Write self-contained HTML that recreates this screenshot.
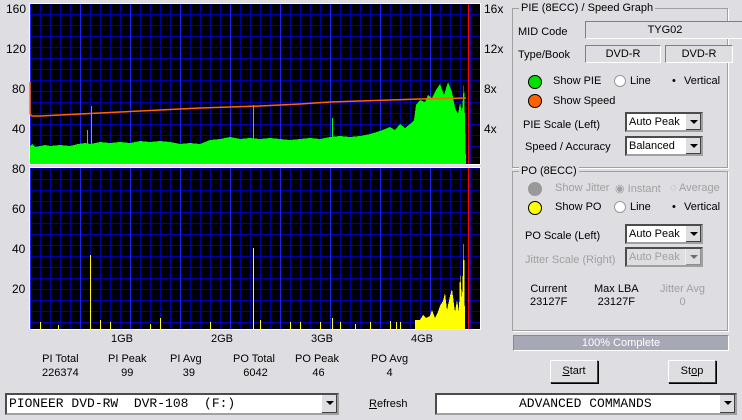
<!DOCTYPE html>
<html><head><style>
body{margin:0;width:742px;height:420px;background:#dedde2;font-family:"Liberation Sans",sans-serif;font-size:11px;color:#000;position:relative;overflow:hidden}
.a{position:absolute}
.grp{position:absolute;border:1px solid #a0a0a0;box-shadow:1px 1px 0 #fff}
.lg{position:absolute;background:#dedde2;padding:0 2px;top:-7px;left:6px}
.box{position:absolute;border:1px solid #808080;border-right-color:#fff;border-bottom-color:#fff;background:#dedde2;text-align:center;line-height:16px}
.sel{position:absolute;background:#fff;border:2px inset #a0a0a0;box-sizing:border-box;line-height:16px;padding-left:2px}
.sel .dd{position:absolute;right:0;top:0;width:15px;height:100%;background:#dedde2;border-left:1px solid #fff;box-shadow:inset -1px -1px 0 #404040}
.sel .dd:after{content:"";position:absolute;left:4px;top:6px;border:4px solid transparent;border-top:4px solid #000;border-bottom:0}
.dis{color:#a0a0a0}
.btn{position:absolute;border:1px solid #fff;border-right-color:#404040;border-bottom-color:#404040;box-shadow:1px 1px 0 #000;text-align:center;background:#dedde2}
.led{position:absolute;width:12px;height:12px;border-radius:50%;border:1px solid #000}
.rad{position:absolute;width:10px;height:10px;border-radius:50%;background:#fff;border:1px solid #999}
</style></head><body>
<svg class="a" style="left:0;top:0" width="500" height="335" shape-rendering="crispEdges">
<defs>
<pattern id="g" x="30" y="3" width="50" height="11" patternUnits="userSpaceOnUse">
<rect width="50" height="11" fill="#000"/>
<path d="M10.5 0V11M20.5 0V11M30.5 0V11M40.5 0V11M0 0.5H50" stroke="#0000a8" stroke-width="1"/>
<path d="M0.5 0V11" stroke="#2020ff" stroke-width="1"/>
</pattern>
</defs>
<rect x="29" y="3" width="452" height="162" fill="url(#g)"/>
<rect x="29" y="167" width="452" height="163" fill="url(#g)"/>
<rect x="29.5" y="3.5" width="451" height="161" fill="none" stroke="#fff" stroke-width="1"/>
<rect x="29.5" y="167.5" width="451" height="162" fill="none" stroke="#fff" stroke-width="1"/>
<polygon fill="#00ff00" points="30,164 30,146 32,144 35,147 40,146 45,145 50,146 60,145 70,146 78,144 85,143 90,144 100,142 110,143 120,142 130,143 140,141 150,142 160,141 170,142 180,144 190,143 200,144 210,140 220,139 230,137 240,139 250,138 260,139 270,138 280,139 290,140 300,139 310,138 320,139 330,137 340,136 350,137 360,136 370,134 380,131 385,129 390,127 395,130 400,124 405,128 410,124 414,120 416,105 420,100 425,102 428,95 432,98 436,90 440,84 444,95 448,82 452,92 455,108 458,114 460,103 462,112 464,82 466,164"/>
<path d="M87.5 148V130M91.5 148V106M253.5 148V105M332.5 148V118" stroke="#00ff00"/>
<polyline fill="none" stroke="#ff6400" stroke-width="1.5" shape-rendering="auto" points="30,82 30,114 32,116 40,116 60,115 80,114 100,113 120,112 140,111 160,110 180,109 200,108 230,107 260,106 300,104 330,102 360,101 390,100 420,99 466,98"/>
<path d="M468.5 4V164M468.5 168V329" stroke="#ff0000" stroke-width="1"/>
<g stroke="#ffff00">
<path d="M40.5 329V322M58.5 329V325M90.5 329V255M100.5 329V320M110.5 329V322M150.5 329V324M160.5 329V318M210.5 329V322M253.5 329V248M260.5 329V320M290.5 329V322M300.5 329V322M320.5 329V322M332.5 329V318M340.5 329V322M355.5 329V324M370.5 329V322M390.5 329V321M396.5 329V322M400.5 329V322"/>
</g>
<polygon fill="#ffff00" points="415,329 415,320 420,320 423,315 426,318 430,316 432,310 435,318 438,312 440,306 443,301 445,293 447,310 450,296 452,289 455,312 457,300 459,312 460,272 462,300 464,236 465,329"/>
</svg>
<div class="a" style="left:6px;top:2px;font-size:12px">160</div>
<div class="a" style="left:6px;top:42px;font-size:12px">120</div>
<div class="a" style="left:12px;top:82px;font-size:12px">80</div>
<div class="a" style="left:12px;top:122px;font-size:12px">40</div>
<div class="a" style="left:12px;top:162px;font-size:12px">80</div>
<div class="a" style="left:12px;top:202px;font-size:12px">60</div>
<div class="a" style="left:12px;top:242px;font-size:12px">40</div>
<div class="a" style="left:12px;top:282px;font-size:12px">20</div>
<div class="a" style="left:484px;top:2px;font-size:12px">16x</div>
<div class="a" style="left:484px;top:42px;font-size:12px">12x</div>
<div class="a" style="left:484px;top:82px;font-size:12px">8x</div>
<div class="a" style="left:484px;top:122px;font-size:12px">4x</div>
<div class="a" style="left:111px;top:333px">1GB</div>
<div class="a" style="left:211px;top:333px">2GB</div>
<div class="a" style="left:311px;top:333px">3GB</div>
<div class="a" style="left:411px;top:333px">4GB</div>
<div class="a" style="left:42px;top:352px;text-align:center;line-height:14px">PI Total<br>226374</div>
<div class="a" style="left:108px;top:352px;text-align:center;line-height:14px">PI Peak<br>99</div>
<div class="a" style="left:170px;top:352px;text-align:center;line-height:14px">PI Avg<br>&nbsp;&nbsp;39</div>
<div class="a" style="left:233px;top:352px;text-align:center;line-height:14px">PO Total<br>&nbsp;6042</div>
<div class="a" style="left:295px;top:352px;text-align:center;line-height:14px">PO Peak<br>&nbsp;46</div>
<div class="a" style="left:371px;top:352px;text-align:center;line-height:14px">PO Avg<br>4</div>
<div class="sel" style="left:5px;top:393px;width:334px;height:22px;font-family:'Liberation Mono',monospace;font-size:13px;line-height:18px">PIONEER DVD-RW &nbsp;DVR-108 &nbsp;(F:)<div class="dd"></div></div>
<div class="a" style="left:369px;top:398px"><u>R</u>efresh</div>
<div class="sel" style="left:435px;top:393px;width:302px;height:22px;font-family:'Liberation Mono',monospace;font-size:13px;line-height:18px;padding-left:82px">ADVANCED COMMANDS<div class="dd"></div></div>

<div class="grp" style="left:512px;top:8px;width:214px;height:158px"><div class="lg">PIE (8ECC) / Speed Graph</div></div>
<div class="a" style="left:518px;top:26px">MID Code</div>
<div class="box" style="left:585px;top:21px;width:158px;height:16px">TYG02</div>
<div class="a" style="left:518px;top:49px">Type/Book</div>
<div class="box" style="left:585px;top:45px;width:74px;height:16px">DVD-R</div>
<div class="box" style="left:665px;top:45px;width:66px;height:16px">DVD-R</div>
<div class="led" style="left:528px;top:75px;background:#00e000"></div>
<div class="a" style="left:553px;top:75px">Show PIE</div>
<div class="rad" style="left:614px;top:75px"></div>
<div class="a" style="left:630px;top:75px">Line</div>
<div class="a" style="left:672px;top:75px">•</div>
<div class="a" style="left:684px;top:75px">Vertical</div>
<div class="led" style="left:528px;top:94px;background:#ff6000"></div>
<div class="a" style="left:553px;top:95px">Show Speed</div>
<div class="a" style="left:523px;top:119px">PIE Scale (Left)</div>
<div class="sel" style="left:625px;top:112px;width:78px;height:20px">Auto Peak<div class="dd"></div></div>
<div class="a" style="left:525px;top:141px">Speed / Accuracy</div>
<div class="sel" style="left:625px;top:136px;width:78px;height:20px">Balanced<div class="dd"></div></div>

<div class="grp" style="left:512px;top:171px;width:214px;height:158px"><div class="lg">PO (8ECC)</div></div>
<div class="led" style="left:528px;top:182px;background:#999;border-color:#999"></div>
<div class="a dis" style="left:555px;top:182px">Show Jitter</div>
<div class="a dis" style="left:615px;top:182px">◉ Instant</div>
<div class="a dis" style="left:670px;top:182px">◌ Average</div>
<div class="led" style="left:528px;top:201px;background:#ffff00"></div>
<div class="a" style="left:555px;top:201px">Show PO</div>
<div class="rad" style="left:614px;top:201px"></div>
<div class="a" style="left:630px;top:201px">Line</div>
<div class="a" style="left:672px;top:201px">•</div>
<div class="a" style="left:684px;top:201px">Vertical</div>
<div class="a" style="left:525px;top:230px">PO Scale (Left)</div>
<div class="sel" style="left:625px;top:224px;width:78px;height:20px">Auto Peak<div class="dd"></div></div>
<div class="a dis" style="left:525px;top:254px">Jitter Scale (Right)</div>
<div class="sel dis" style="left:625px;top:247px;width:78px;height:20px;background:#dedde2">Auto Peak<div class="dd" style="opacity:.5"></div></div>
<div class="a" style="left:530px;top:283px;text-align:center;line-height:13px">Current<br>23127F</div>
<div class="a" style="left:594px;top:283px;text-align:center;line-height:13px">Max LBA<br>23127F</div>
<div class="a dis" style="left:660px;top:283px;text-align:center;line-height:13px">Jitter Avg<br>0</div>
<div class="a" style="left:513px;top:335px;width:214px;height:14px;background:#a7a8b6;color:#fff;text-align:center;line-height:14px;border:1px solid #fff;border-top-color:#888;border-left-color:#888">100% Complete</div>
<div class="btn" style="left:550px;top:360px;width:46px;height:21px;line-height:21px"><u>S</u>tart</div>
<div class="btn" style="left:668px;top:360px;width:46px;height:21px;line-height:21px">St<u>o</u>p</div>
</body></html>
